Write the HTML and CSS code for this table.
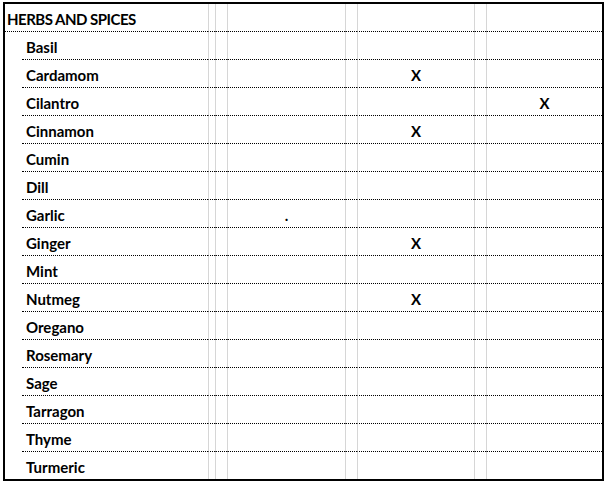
FILE: index.html
```html
<!DOCTYPE html>
<html>
<head>
<meta charset="utf-8">
<link rel="stylesheet" href="styles.css">
</head>
<body>
<div class="sheet">
  <div class="row">
    <div class="cell title">HERBS AND SPICES</div>
    <div class="cell g"></div><div class="cell g"></div><div class="cell g"></div><div class="cell g"></div><div class="cell g"></div><div class="cell g"></div><div class="cell g"></div>
  </div>
  <div class="row"><div class="pad"></div><div class="cell name">Basil</div><div class="cell g"></div><div class="cell g"></div><div class="cell g c"></div><div class="cell g"></div><div class="cell g c"></div><div class="cell g"></div><div class="cell g c"></div></div>
  <div class="row"><div class="pad"></div><div class="cell name">Cardamom</div><div class="cell g"></div><div class="cell g"></div><div class="cell g c"></div><div class="cell g"></div><div class="cell g c">X</div><div class="cell g"></div><div class="cell g c"></div></div>
  <div class="row"><div class="pad"></div><div class="cell name">Cilantro</div><div class="cell g"></div><div class="cell g"></div><div class="cell g c"></div><div class="cell g"></div><div class="cell g c"></div><div class="cell g"></div><div class="cell g c">X</div></div>
  <div class="row"><div class="pad"></div><div class="cell name">Cinnamon</div><div class="cell g"></div><div class="cell g"></div><div class="cell g c"></div><div class="cell g"></div><div class="cell g c">X</div><div class="cell g"></div><div class="cell g c"></div></div>
  <div class="row"><div class="pad"></div><div class="cell name">Cumin</div><div class="cell g"></div><div class="cell g"></div><div class="cell g c"></div><div class="cell g"></div><div class="cell g c"></div><div class="cell g"></div><div class="cell g c"></div></div>
  <div class="row"><div class="pad"></div><div class="cell name">Dill</div><div class="cell g"></div><div class="cell g"></div><div class="cell g c"></div><div class="cell g"></div><div class="cell g c"></div><div class="cell g"></div><div class="cell g c"></div></div>
  <div class="row"><div class="pad"></div><div class="cell name">Garlic</div><div class="cell g"></div><div class="cell g"></div><div class="cell g c">.</div><div class="cell g"></div><div class="cell g c"></div><div class="cell g"></div><div class="cell g c"></div></div>
  <div class="row"><div class="pad"></div><div class="cell name">Ginger</div><div class="cell g"></div><div class="cell g"></div><div class="cell g c"></div><div class="cell g"></div><div class="cell g c">X</div><div class="cell g"></div><div class="cell g c"></div></div>
  <div class="row"><div class="pad"></div><div class="cell name">Mint</div><div class="cell g"></div><div class="cell g"></div><div class="cell g c"></div><div class="cell g"></div><div class="cell g c"></div><div class="cell g"></div><div class="cell g c"></div></div>
  <div class="row"><div class="pad"></div><div class="cell name">Nutmeg</div><div class="cell g"></div><div class="cell g"></div><div class="cell g c"></div><div class="cell g"></div><div class="cell g c">X</div><div class="cell g"></div><div class="cell g c"></div></div>
  <div class="row"><div class="pad"></div><div class="cell name">Oregano</div><div class="cell g"></div><div class="cell g"></div><div class="cell g c"></div><div class="cell g"></div><div class="cell g c"></div><div class="cell g"></div><div class="cell g c"></div></div>
  <div class="row"><div class="pad"></div><div class="cell name">Rosemary</div><div class="cell g"></div><div class="cell g"></div><div class="cell g c"></div><div class="cell g"></div><div class="cell g c"></div><div class="cell g"></div><div class="cell g c"></div></div>
  <div class="row"><div class="pad"></div><div class="cell name">Sage</div><div class="cell g"></div><div class="cell g"></div><div class="cell g c"></div><div class="cell g"></div><div class="cell g c"></div><div class="cell g"></div><div class="cell g c"></div></div>
  <div class="row"><div class="pad"></div><div class="cell name">Tarragon</div><div class="cell g"></div><div class="cell g"></div><div class="cell g c"></div><div class="cell g"></div><div class="cell g c"></div><div class="cell g"></div><div class="cell g c"></div></div>
  <div class="row"><div class="pad"></div><div class="cell name">Thyme</div><div class="cell g"></div><div class="cell g"></div><div class="cell g c"></div><div class="cell g"></div><div class="cell g c"></div><div class="cell g"></div><div class="cell g c"></div></div>
  <div class="row last"><div class="pad"></div><div class="cell name">Turmeric</div><div class="cell g"></div><div class="cell g"></div><div class="cell g c"></div><div class="cell g"></div><div class="cell g c"></div><div class="cell g"></div><div class="cell g c"></div></div>
</div>
</body>
</html>
```

FILE: styles.css
```css
html, body {
  margin: 0;
  padding: 0;
  background: #fff;
}
body {
  font-family: Lato, "Liberation Sans", sans-serif;
  font-weight: 700;
  font-size: 15px;
  color: #000;
}
.sheet {
  margin: 2px 0 0 3px;
  width: 597px;
  border: 2px solid #000;
}
.row {
  display: grid;
  grid-template-columns: 17px 186px 7px 12px 118px 12px 117px 12px 116px;
  height: 28px;
}
.row.last {
  height: 27px;
}
.cell, .pad {
  box-sizing: border-box;
  height: 100%;
  padding-top: 4px;
  line-height: 23px;
  white-space: nowrap;
}
.cell {
  border-bottom: 1px dotted #000;
}
.row.last .cell {
  border-bottom: 0;
}
.title {
  grid-column: span 2;
  padding-left: 2px;
  letter-spacing: -0.5px;
}
.name {
  padding-left: 4px;
}
.g {
  border-left: 1px solid #d6d6d6;
}
.c {
  text-align: center;
}
```
